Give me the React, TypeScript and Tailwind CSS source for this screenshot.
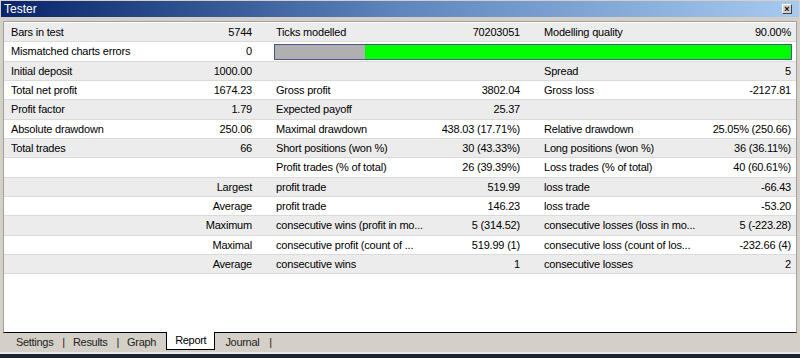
import React from 'react'

type Row = {
  a?: string
  av?: string
  b?: string
  bv?: string
  c?: string
  cv?: string
  bar?: boolean
}

const ROWS: Row[] = [
  { a: 'Bars in test', av: '5744', b: 'Ticks modelled', bv: '70203051', c: 'Modelling quality', cv: '90.00%' },
  { a: 'Mismatched charts errors', av: '0', bar: true },
  { a: 'Initial deposit', av: '1000.00', c: 'Spread', cv: '5' },
  { a: 'Total net profit', av: '1674.23', b: 'Gross profit', bv: '3802.04', c: 'Gross loss', cv: '-2127.81' },
  { a: 'Profit factor', av: '1.79', b: 'Expected payoff', bv: '25.37' },
  { a: 'Absolute drawdown', av: '250.06', b: 'Maximal drawdown', bv: '438.03 (17.71%)', c: 'Relative drawdown', cv: '25.05% (250.66)' },
  { a: 'Total trades', av: '66', b: 'Short positions (won %)', bv: '30 (43.33%)', c: 'Long positions (won %)', cv: '36 (36.11%)' },
  { b: 'Profit trades (% of total)', bv: '26 (39.39%)', c: 'Loss trades (% of total)', cv: '40 (60.61%)' },
  { av: 'Largest', b: 'profit trade', bv: '519.99', c: 'loss trade', cv: '-66.43' },
  { av: 'Average', b: 'profit trade', bv: '146.23', c: 'loss trade', cv: '-53.20' },
  { av: 'Maximum', b: 'consecutive wins (profit in mo...', bv: '5 (314.52)', c: 'consecutive losses (loss in mo...', cv: '5 (-223.28)' },
  { av: 'Maximal', b: 'consecutive profit (count of ...', bv: '519.99 (1)', c: 'consecutive loss (count of los...', cv: '-232.66 (4)' },
  { av: 'Average', b: 'consecutive wins', bv: '1', c: 'consecutive losses', cv: '2' },
]

function Cell({ label, value, className }: { label?: string; value?: string; className: string }) {
  return (
    <div className={`flex items-center ${className}`}>
      <span className="flex-1 whitespace-nowrap overflow-hidden">{label}</span>
      <span className="whitespace-nowrap text-right">{value}</span>
    </div>
  )
}

export default function App() {
  return (
    <div
      className="w-[800px] h-[358px] bg-[#d4d0c8] flex flex-col text-[11px] text-black overflow-hidden"
      style={{ fontFamily: '"Liberation Sans", Arial, sans-serif' }}
    >
      {/* Title bar */}
      <div className="mt-[1px] mx-[1px] h-[16px] flex items-center justify-between bg-gradient-to-r from-[#0a246a] via-[#5f86bd] to-[#a6caf0] pl-[3px] pr-[7px]">
        <span className="text-white text-[12px] leading-none">Tester</span>
        <div className="w-[10px] h-[10px] bg-[#d4d0c8] border border-t-white border-l-white border-r-[#404040] border-b-[#404040] flex items-center justify-center text-[9px] leading-none font-bold text-black">
          ×
        </div>
      </div>

      {/* Panel */}
      <div className="mt-[4px] mx-[3px] flex-1 flex flex-col bg-white border-t border-l border-r border-t-[#a0a0a0] border-l-[#a0a0a0] border-r-[#a0a0a0] border-b border-b-black">
        <div className="pt-[1px] tracking-[-0.2px]">
          {ROWS.map((r, i) => (
            <div
              key={i}
              className={`h-[19.35px] flex border-b border-[#dadada] ${i % 2 === 0 ? 'bg-[#ececec]' : 'bg-white'}`}
            >
              <Cell label={r.a} value={r.av} className="w-[272px] pl-[7px] pr-[24px]" />
              {r.bar ? (
                <div className="flex-1 flex items-center pr-[2px]">
                  <div className="-ml-[2px] w-full h-[16px] border border-[#475a83] flex">
                    <div className="w-[90px] bg-[#b0b0b0]" />
                    <div className="flex-1 bg-[#00ff00]" />
                  </div>
                </div>
              ) : (
                <>
                  <Cell label={r.b} value={r.bv} className="w-[268px] pr-[24px]" />
                  <Cell label={r.c} value={r.cv} className="flex-1 pr-[5px]" />
                </>
              )}
            </div>
          ))}
        </div>
      </div>

      {/* Tabs */}
      <div className="mx-[3px] h-[19px] flex items-start pl-[13px] text-[#222] tracking-[-0.3px]">
        <span className="h-[18px] flex items-center">Settings</span>
        <span className="h-[18px] flex items-center ml-[9px]">|</span>
        <span className="h-[18px] flex items-center ml-[8px]">Results</span>
        <span className="h-[18px] flex items-center ml-[9px]">|</span>
        <span className="h-[18px] flex items-center ml-[8px]">Graph</span>
        <div className="-mt-[1px] h-[18px] ml-[10px] px-[8px] bg-white border-l border-r border-b border-black flex items-center text-black">
          Report
        </div>
        <span className="h-[18px] flex items-center ml-[10px]">Journal</span>
        <span className="h-[18px] flex items-center ml-[10px]">|</span>
      </div>
      <div className="h-[2px] bg-[#e8e8e8]" />
      <div className="flex-none h-[4px] bg-[#1c2333]" />
    </div>
  )
}
